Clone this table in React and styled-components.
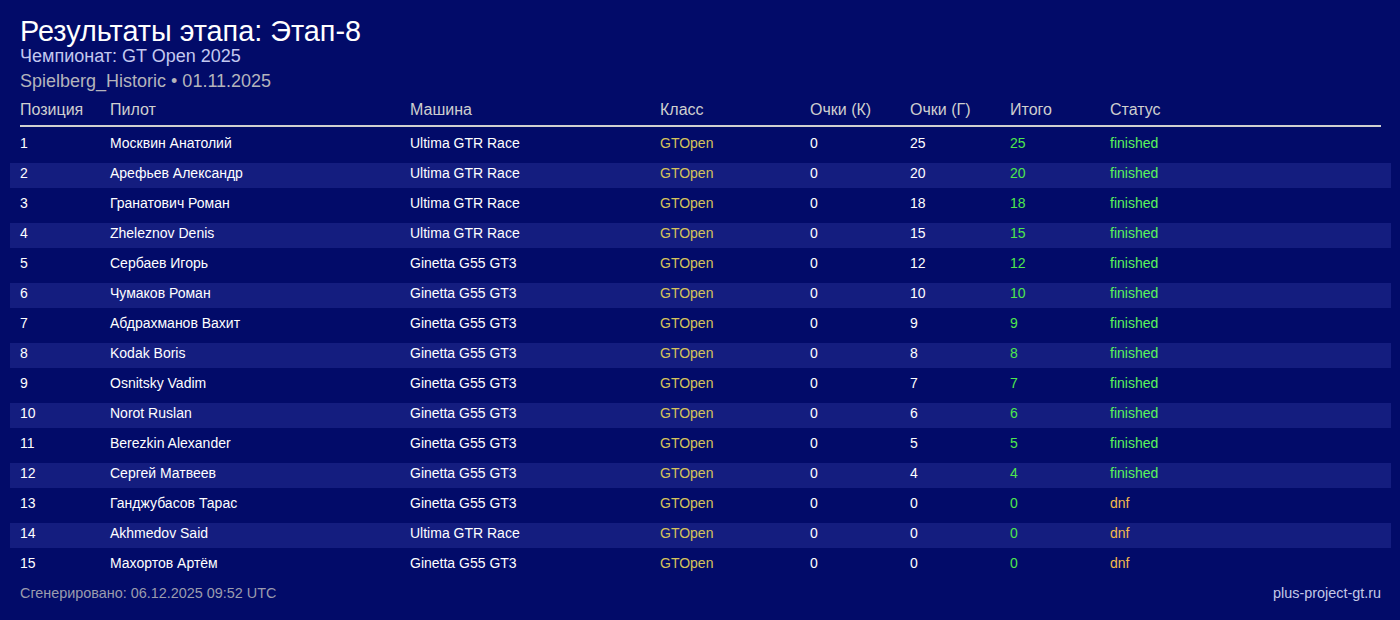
import React from 'react'
import styled, { createGlobalStyle } from 'styled-components'

const GlobalStyle = createGlobalStyle`
  html, body {
    margin: 0;
    padding: 0;
    background: #020b69;
  }
  body {
    font-family: "Liberation Sans", Arial, sans-serif;
    color: #ffffff;
  }
`

const colorDict = {
  text: '#ffffff',
  klass: '#d6c35a',
  total: '#4de84d',
  finished: '#5af55a',
  dnf: '#f2b94c'
}

const Page = styled.div`
  width: 1400px;
  height: 620px;
  box-sizing: border-box;
  padding: 16px 9px 0 10px;
  display: flex;
  flex-direction: column;
`

const Title = styled.h1`
  margin: 0 10px;
  padding-top: 1px;
  font-size: 28.8px;
  line-height: 29px;
  font-weight: normal;
`

const Sub = styled.div`
  margin: 0 10px;
  font-size: 18px;
  line-height: 20px;
  color: ${props => props.color};
  margin-top: ${props => props.top || 0}px;
`

const HeadRow = styled.div`
  display: grid;
  grid-template-columns: 90px 300px 250px 150px 100px 100px 100px 1fr;
  margin: 9px 10px 6px;
  padding-bottom: 5px;
  border-bottom: 2px solid #d0d0d0;
  font-size: 16px;
  line-height: 20px;
  color: #cfcfcf;
`

const Rows = styled.div`
  display: flex;
  flex-direction: column;
  gap: 5px;
`

const Row = styled.div`
  display: grid;
  grid-template-columns: 90px 300px 250px 150px 100px 100px 100px 1fr;
  height: 25px;
  box-sizing: border-box;
  padding: 2px 10px 0;
  font-size: 14px;
  line-height: 16px;
  background: ${props => (props.striped ? '#141d7f' : 'transparent')};
`

const Cell = styled.div`
  color: ${props => colorDict[props.tone || 'text']};
  white-space: nowrap;
`

const Footer = styled.div`
  display: flex;
  justify-content: space-between;
  margin: 7px 10px 0;
  font-size: 14.4px;
  line-height: 16px;
  color: #9b9cae;
  .site {
    color: #c3c8e6;
  }
`

const results = [
  ['Москвин Анатолий', 'Ultima GTR Race', 25, 'finished'],
  ['Арефьев Александр', 'Ultima GTR Race', 20, 'finished'],
  ['Гранатович Роман', 'Ultima GTR Race', 18, 'finished'],
  ['Zheleznov Denis', 'Ultima GTR Race', 15, 'finished'],
  ['Сербаев Игорь', 'Ginetta G55 GT3', 12, 'finished'],
  ['Чумаков Роман', 'Ginetta G55 GT3', 10, 'finished'],
  ['Абдрахманов Вахит', 'Ginetta G55 GT3', 9, 'finished'],
  ['Kodak Boris', 'Ginetta G55 GT3', 8, 'finished'],
  ['Osnitsky Vadim', 'Ginetta G55 GT3', 7, 'finished'],
  ['Norot Ruslan', 'Ginetta G55 GT3', 6, 'finished'],
  ['Berezkin Alexander', 'Ginetta G55 GT3', 5, 'finished'],
  ['Сергей Матвеев', 'Ginetta G55 GT3', 4, 'finished'],
  ['Ганджубасов Тарас', 'Ginetta G55 GT3', 0, 'dnf'],
  ['Akhmedov Said', 'Ultima GTR Race', 0, 'dnf'],
  ['Махортов Артём', 'Ginetta G55 GT3', 0, 'dnf']
]

const headers = ['Позиция', 'Пилот', 'Машина', 'Класс', 'Очки (К)', 'Очки (Г)', 'Итого', 'Статус']

const App = () => {
  return (
    <Page>
      <GlobalStyle />
      <Title>Результаты этапа: Этап-8</Title>
      <Sub color='#c3c8f0'>Чемпионат: GT Open 2025</Sub>
      <Sub color='#b4b4bc' top={5}>Spielberg_Historic • 01.11.2025</Sub>
      <HeadRow>
        {headers.map(h => <div key={h}>{h}</div>)}
      </HeadRow>
      <Rows>
        {results.map(([pilot, car, points, status], i) => (
          <Row key={pilot} striped={i % 2 === 1}>
            <Cell>{i + 1}</Cell>
            <Cell>{pilot}</Cell>
            <Cell>{car}</Cell>
            <Cell tone='klass'>GTOpen</Cell>
            <Cell>0</Cell>
            <Cell>{points}</Cell>
            <Cell tone='total'>{points}</Cell>
            <Cell tone={status}>{status}</Cell>
          </Row>
        ))}
      </Rows>
      <Footer>
        <span>Сгенерировано: 06.12.2025 09:52 UTC</span>
        <span className='site'>plus-project-gt.ru</span>
      </Footer>
    </Page>
  )
}

export default App
